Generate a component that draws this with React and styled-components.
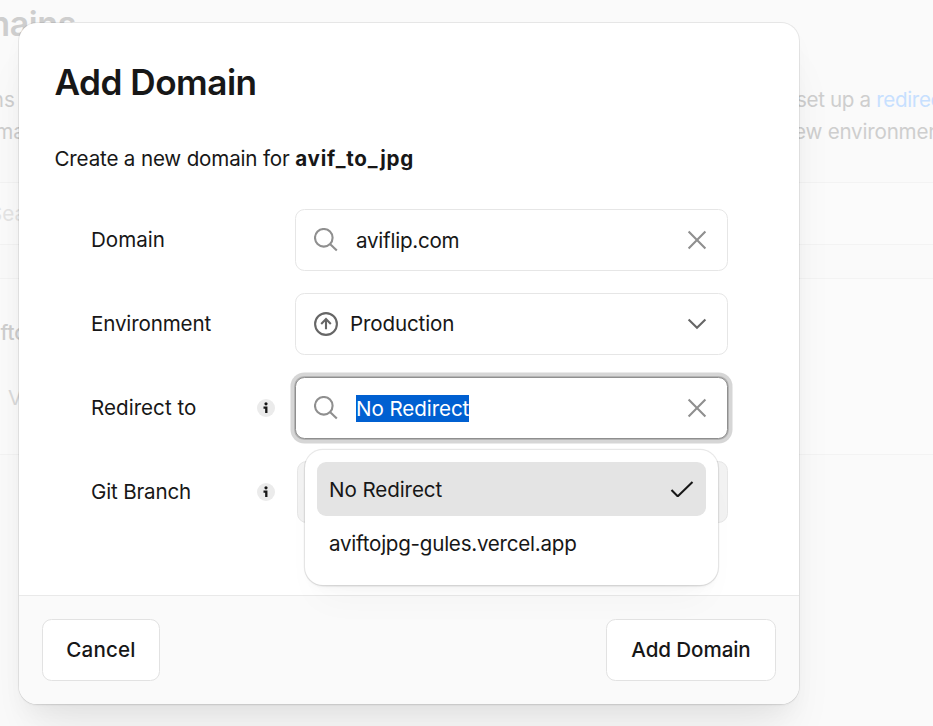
import React from "react";
import styled, { createGlobalStyle, css } from "styled-components";

const GlobalStyle = createGlobalStyle`
  *, *::before, *::after { box-sizing: border-box; }
  html, body { margin: 0; height: 100%; overflow: hidden; background: #fafafa; }
  body {
    font-family: Inter, "Liberation Sans", sans-serif;
    font-size: 20.6px;
    color: #171717;
  }
`;

const Page = styled.div`
  position: relative;
  width: 933px;
  height: 726px;
  overflow: hidden;
  background: #fafafa;
`;

const Backdrop = styled.main`
  display: flex;
  flex-direction: column;
  height: 100%;
  color: #cecece;
  white-space: nowrap;
`;

const PageTitle = styled.h1`
  margin: 0 0 39px -65px;
  height: 45px;
  line-height: 47px;
  font-size: 34px;
  font-weight: 600;
  letter-spacing: -0.4px;
`;

const Copy = styled.div`
  display: grid;
  grid-template-columns: 797px 1fr;
  grid-auto-rows: 32px;
  line-height: 32px;
  margin-bottom: 34px;
`;

const CopyStart = styled.span`
  margin-left: ${(p) => p.$shift}px;
`;

const CopyEnd = styled.span`
  margin-left: ${(p) => p.$shift || 0}px;
  letter-spacing: ${(p) => p.$tracking || 0}px;
`;

const FadedLink = styled.a`
  color: #c7e0ff;
`;

const Band = styled.div`
  height: ${(p) => p.$height}px;
  border-top: 1px solid #f3f3f3;
  background: ${(p) => (p.$raised ? "#fbfbfb" : "#fafafa")};
`;

const SearchHint = styled.div`
  margin-left: -11px;
  line-height: 62px;
  color: #e4e4e4;
`;

const EntryName = styled.div`
  margin: 38px 0 0 -28px;
  line-height: 32px;
  font-weight: 500;
`;

const EntryStatus = styled.div`
  margin: 33px 0 0 8px;
  line-height: 32px;
  color: #dadada;
`;

const Dialog = styled.section`
  position: absolute;
  left: 19px;
  top: 23px;
  width: 780px;
  height: 681px;
  display: flex;
  flex-direction: column;
  overflow: hidden;
  border-radius: 18px;
  background: #fff;
  box-shadow:
    0 0 0 1px rgba(0, 0, 0, 0.08),
    0 1.5px 1.5px rgba(0, 0, 0, 0.03),
    0 12px 25px -6px rgba(0, 0, 0, 0.05),
    0 37px 50px -12px rgba(0, 0, 0, 0.07);
`;

const DialogBody = styled.div`
  flex: 1;
  padding: 35px 36px 0;
`;

const DialogTitle = styled.h2`
  margin: 0 0 0 -0.5px;
  height: 48px;
  line-height: 48px;
  font-size: 35.2px;
  font-weight: 600;
  letter-spacing: -0.52px;
`;

const Intro = styled.p`
  margin: 37px 0 34px -0.5px;
  line-height: 32px;
  letter-spacing: -0.17px;
`;

const ProjectName = styled.strong`
  font-weight: 700;
  letter-spacing: 0.75px;
`;

const Form = styled.div`
  display: flex;
  flex-direction: column;
  gap: 22px;
  padding-left: 36px;
`;

const FieldRow = styled.div`
  position: relative;
  display: grid;
  grid-template-columns: 166px 37.5px 433.5px;
  align-items: center;
  height: 62px;
`;

const Label = styled.label`
  padding-bottom: 1px;
  letter-spacing: ${(p) => p.$tracking || 0}px;
`;

const InfoSlot = styled.span`
  display: flex;
  padding-bottom: 1px;
`;

const Control = styled.div`
  display: flex;
  align-items: center;
  height: 62px;
  padding: 0 18px;
  border: 1px solid #e6e6e6;
  border-radius: 9.5px;
  background: #fff;
  ${(p) =>
    p.$focused &&
    css`
      border-color: #8f8f8f;
      box-shadow: 0 0 0 1px #b4b4b4, 0 0 0 4.5px #d6d6d6;
    `}
  ${(p) =>
    p.$disabled &&
    css`
      margin-left: 2px;
      background: #f2f2f2;
    `}
`;

const Value = styled.span`
  flex: 1;
  margin-left: ${(p) => p.$gap}px;
  padding-top: ${(p) => p.$drop || 0}px;
  padding-bottom: ${(p) => p.$lift || 0}px;
  letter-spacing: ${(p) => p.$tracking}px;
`;

const Selected = styled.mark`
  display: inline-block;
  height: 27px;
  line-height: 27px;
  background: #0060d1;
  color: #fff;
`;

const Menu = styled.div`
  position: absolute;
  left: 214px;
  top: 73px;
  z-index: 2;
  width: 413px;
  height: 135px;
  padding: 12px;
  border-radius: 18px;
  background: #fff;
  box-shadow:
    0 0 0 1.2px rgba(0, 0, 0, 0.09),
    0 1.5px 1.5px rgba(0, 0, 0, 0.04),
    0 6px 12px -6px rgba(0, 0, 0, 0.05),
    0 25px 37px -12px rgba(0, 0, 0, 0.03);
`;

const MenuItem = styled.div`
  display: flex;
  align-items: center;
  justify-content: space-between;
  height: 54px;
  padding: 0 12px;
  border-radius: 9px;
  background: ${(p) => (p.$active ? "#e4e4e4" : "transparent")};
  letter-spacing: ${(p) => p.$tracking}px;
`;

const DialogFooter = styled.footer`
  display: flex;
  justify-content: space-between;
  height: 109px;
  padding: 23px;
  border-top: 1px solid #e9e9e9;
  background: #fafafa;
`;

const Button = styled.button`
  width: ${(p) => p.$width}px;
  height: 62px;
  padding: 0 0 2px;
  border: 1px solid #e2e2e2;
  border-radius: 9.5px;
  background: #fff;
  color: #171717;
  font: 500 20.6px Inter, "Liberation Sans", sans-serif;
  letter-spacing: ${(p) => p.$tracking}px;
`;

const Icon = styled.svg`
  display: block;
  flex: none;
  fill: none;
  stroke: ${(p) => p.$color};
  stroke-width: 2.1;
`;

const SearchIcon = () => (
  <Icon width="24" height="24" viewBox="0 0 24 24" $color="#8f8f8f">
    <circle cx="9.8" cy="9.8" r="8.8" />
    <path d="M16 16 22.8 22.6" />
  </Icon>
);

const ClearIcon = () => (
  <Icon width="24" height="24" viewBox="0 0 24 24" $color="#8f8f8f">
    <path d="M3.6 3.6 20.4 20.4M20.4 3.6 3.6 20.4" />
  </Icon>
);

const ChevronIcon = () => (
  <Icon width="24" height="24" viewBox="0 0 24 24" $color="#666">
    <path d="M3.6 7.6 12 15.8 20.4 7.6" />
  </Icon>
);

const ProductionIcon = () => (
  <Icon width="24" height="24" viewBox="0 0 24 24" $color="#666">
    <circle cx="12" cy="12" r="10.9" />
    <path d="M12 17.2V7.2M7.2 11.9 12 7.1 16.8 11.9" />
  </Icon>
);

const CheckIcon = () => (
  <Icon width="24" height="24" viewBox="0 0 24 24" $color="#171717">
    <path d="M1.5 13 7.4 18.9H8.1L22.5 5.1" />
  </Icon>
);

const InfoIcon = () => (
  <svg width="18" height="18" viewBox="0 0 18 18">
    <circle cx="9" cy="9" r="9" fill="#ebebeb" />
    <circle cx="9" cy="4.8" r="1.6" fill="#171717" />
    <path d="M6.5 8.6H9.3V14" fill="none" stroke="#171717" strokeWidth="2.3" />
  </svg>
);

export default function App() {
  return (
    <>
      <GlobalStyle />
      <Page>
        <Backdrop>
          <PageTitle>Domains</PageTitle>
          <Copy>
            <CopyStart $shift={-70}>Domains</CopyStart>
            <CopyEnd $shift={-1} $tracking={-0.35}>
              set up a <FadedLink>redirect</FadedLink>
            </CopyEnd>
            <CopyStart $shift={-32}>Domain</CopyStart>
            <CopyEnd $shift={-15} $tracking={-0.2}>
              new environment
            </CopyEnd>
          </Copy>
          <Band $height={62} $raised>
            <SearchHint>Search</SearchHint>
          </Band>
          <Band $height={34} />
          <Band $height={176} $raised>
            <EntryName>aviftojpg</EntryName>
            <EntryStatus>Valid</EntryStatus>
          </Band>
          <Band $height={272} />
        </Backdrop>

        <Dialog>
          <DialogBody>
            <DialogTitle>Add Domain</DialogTitle>
            <Intro>
              Create a new domain for <ProjectName>avif_to_jpg</ProjectName>
            </Intro>
            <Form>
              <FieldRow>
                <Label $tracking={0}>Domain</Label>
                <InfoSlot />
                <Control>
                  <SearchIcon />
                  <Value $gap={18.5} $tracking={-0.25} $drop={1}>aviflip.com</Value>
                  <ClearIcon />
                </Control>
              </FieldRow>
              <FieldRow>
                <Label $tracking={-0.15}>Environment</Label>
                <InfoSlot />
                <Control>
                  <ProductionIcon />
                  <Value $gap={12.5} $tracking={-0.15} $lift={2}>Production</Value>
                  <ChevronIcon />
                </Control>
              </FieldRow>
              <FieldRow>
                <Label $tracking={0.02}>Redirect to</Label>
                <InfoSlot><InfoIcon /></InfoSlot>
                <Control $focused>
                  <SearchIcon />
                  <Value $gap={18.5} $tracking={-0.08} $drop={1}>
                    <Selected>No Redirect</Selected>
                  </Value>
                  <ClearIcon />
                </Control>
                <Menu>
                  <MenuItem $active $tracking={-0.09}>
                    No Redirect
                    <CheckIcon />
                  </MenuItem>
                  <MenuItem $tracking={-0.25}>aviftojpg-gules.vercel.app</MenuItem>
                </Menu>
              </FieldRow>
              <FieldRow>
                <Label $tracking={-0.18}>Git Branch</Label>
                <InfoSlot><InfoIcon /></InfoSlot>
                <Control $disabled />
              </FieldRow>
            </Form>
          </DialogBody>
          <DialogFooter>
            <Button $width={118} $tracking={0.15}>Cancel</Button>
            <Button $width={170} $tracking={-0.1}>Add Domain</Button>
          </DialogFooter>
        </Dialog>
      </Page>
    </>
  );
}
